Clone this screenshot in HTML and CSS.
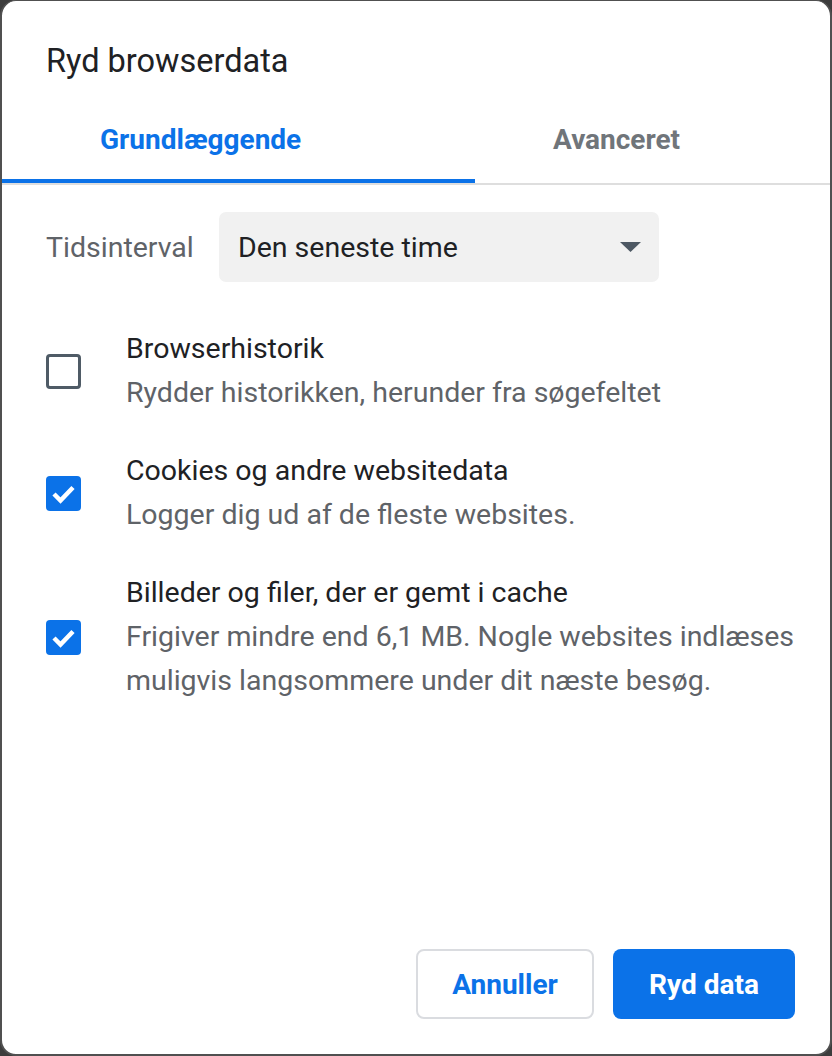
FILE: index.html
```html
<!DOCTYPE html>
<html lang="da">
<head>
<meta charset="utf-8">
<title>Ryd browserdata</title>
<link rel="stylesheet" href="styles.css">
</head>
<body>
<div class="dialog">
  <h1 class="title">Ryd browserdata</h1>
  <div class="tabs">
    <div class="tab tab-active">Grundlæggende</div>
    <div class="tab tab-second">Avanceret</div>
  </div>
  <div class="content">
    <div class="range">
      <span class="range-label">Tidsinterval</span>
      <div class="select">
        <span>Den seneste time</span>
        <svg class="arrow" width="21" height="10" viewBox="0 0 21 10"><path d="M0 0h21L10.5 10z" fill="#4d5863"/></svg>
      </div>
    </div>
    <div class="item">
      <span class="box"></span>
      <div class="texts">
        <div class="primary">Browserhistorik</div>
        <div class="secondary">Rydder historikken, herunder fra søgefeltet</div>
      </div>
    </div>
    <div class="item">
      <span class="box box-checked"><svg width="35" height="35" viewBox="0 0 35 35"><path d="M8 18l6.5 6.5 12.5-13" fill="none" stroke="#fff" stroke-width="4.5"/></svg></span>
      <div class="texts">
        <div class="primary">Cookies og andre websitedata</div>
        <div class="secondary">Logger dig ud af de fleste websites.</div>
      </div>
    </div>
    <div class="item">
      <span class="box box-checked"><svg width="35" height="35" viewBox="0 0 35 35"><path d="M8 18l6.5 6.5 12.5-13" fill="none" stroke="#fff" stroke-width="4.5"/></svg></span>
      <div class="texts">
        <div class="primary">Billeder og filer, der er gemt i cache</div>
        <div class="secondary">Frigiver mindre end 6,1 MB. Nogle websites indlæses muligvis langsommere under dit næste besøg.</div>
      </div>
    </div>
  </div>
  <div class="actions">
    <button class="btn btn-cancel">Annuller</button>
    <button class="btn btn-primary">Ryd data</button>
  </div>
</div>
</body>
</html>
```
FILE: styles.css
```css
html, body {
  margin: 0;
  padding: 0;
  background: #3c3c3c;
}
body {
  font-family: Roboto, "Liberation Sans", sans-serif;
  width: 832px;
  height: 1056px;
}
.dialog {
  box-sizing: border-box;
  width: 832px;
  height: 1056px;
  background: #fff;
  border: 2px solid #505050;
  border-top-width: 1px;
  border-radius: 16px;
  display: flex;
  flex-direction: column;
  overflow: hidden;
}
.title {
  margin: 40px 0 20px 44px;
  font-size: 32.5px;
  font-weight: 400;
  line-height: 40px;
  color: #202124;
}
.tabs {
  display: flex;
  border-bottom: 2px solid #dedede;
}
.tab {
  box-sizing: border-box;
  height: 82px;
  line-height: 78px;
  font-size: 28px;
  font-weight: 700;
  color: #70757a;
  border-bottom: 4px solid transparent;
}
.tab-active {
  width: 473px;
  padding-left: 98px;
  color: #0b72e8;
  border-bottom-color: #0b72e8;
}
.tab-second {
  flex: 1;
  padding-left: 78px;
}
.content {
  padding: 27px 0 0 44px;
  display: flex;
  flex-direction: column;
}
.range {
  display: flex;
  align-items: center;
}
.range-label {
  width: 173px;
  flex-shrink: 0;
  font-size: 28.5px;
  color: #5f6368;
}
.select {
  box-sizing: border-box;
  width: 440px;
  height: 70px;
  background: #f1f1f1;
  border-radius: 7px;
  display: flex;
  align-items: center;
  justify-content: space-between;
  padding: 0 18px 0 19px;
  font-size: 28.5px;
  color: #202124;
}
.item {
  display: flex;
  align-items: center;
  margin-top: 34px;
}
.range + .item {
  margin-top: 45px;
}
.box {
  box-sizing: border-box;
  width: 35px;
  height: 35px;
  flex-shrink: 0;
  border: 3px solid #4f5b66;
  border-radius: 4px;
  margin-right: 45px;
}
.box-checked {
  border: none;
  background: #0b72e8;
}
.box svg {
  display: block;
}
.texts {
  font-size: 28.5px;
  line-height: 44px;
  padding-right: 20px;
}
.primary {
  color: #202124;
}
.secondary {
  color: #5f6368;
}
.actions {
  margin-top: auto;
  display: flex;
  justify-content: flex-end;
  gap: 19px;
  padding: 0 35px 35px 0;
}
.btn {
  box-sizing: border-box;
  height: 70px;
  border-radius: 8px;
  font-family: Roboto, "Liberation Sans", sans-serif;
  font-size: 28px;
  font-weight: 700;
  cursor: pointer;
}
.btn-cancel {
  width: 178px;
  background: #fff;
  border: 2px solid #dadce0;
  color: #0b72e8;
}
.btn-primary {
  width: 182px;
  background: #0b72e8;
  border: none;
  color: #fff;
}
```
